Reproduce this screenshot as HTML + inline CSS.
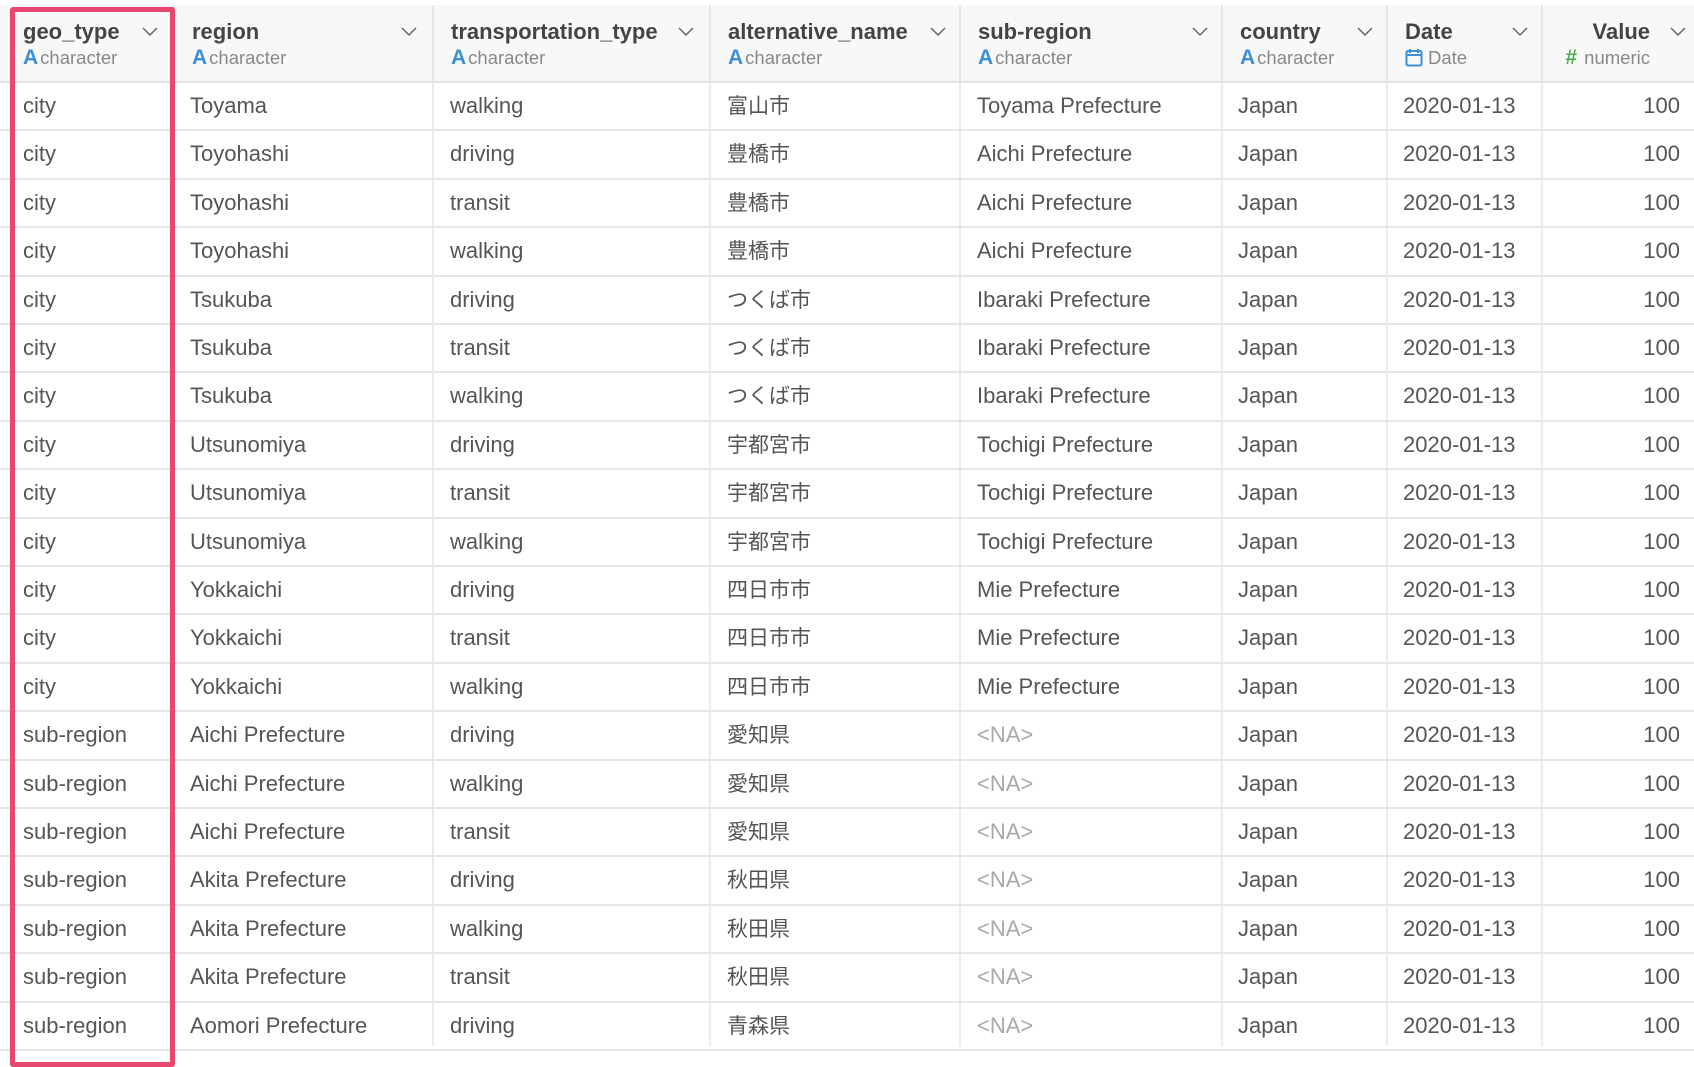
<!DOCTYPE html>
<html><head><meta charset="utf-8"><style>
*{margin:0;padding:0;box-sizing:border-box}
body{width:1694px;height:1046px;overflow:hidden;background:#fff;font-family:"Liberation Sans","Noto Sans CJK JP",sans-serif;color:#555;position:relative}
.hdr{position:absolute;top:5px;left:0;width:1694px;height:78px;background:#f8f8f8;border-bottom:2px solid #e3e3e3}
.c{position:absolute;top:0;height:100%;border-left:2px solid #e6e6e6}
.h .t{position:absolute;top:14px;left:17px;font-weight:bold;font-size:22px;line-height:26px;color:#444}
.h .s{position:absolute;top:42px;left:17px;font-size:18.5px;line-height:22px;color:#888}
.h .s b{color:#3a8fd9;font-size:21px;margin-right:2px}
.ch{position:absolute;top:20px;width:16px;height:12px}
.row{position:absolute;left:0;width:1694px;height:48.4px;border-bottom:2px solid #e6e6e6}
.row span{position:absolute;top:10px;font-size:22px;line-height:26px;color:#555;white-space:nowrap}
.row span.j{font-family:"Noto Sans CJK JP",sans-serif;font-size:21px;top:9px;line-height:26px}
.vl{position:absolute;top:83px;bottom:0;border-left:2px solid #ececec}
.red{position:absolute;left:10px;top:7px;width:165px;height:1060px;border:5px solid #e8476f;border-radius:3px}
.na{color:#aaa!important}
</style></head><body>
<div class="hdr">
<div class="h c" style="left:0;width:173px;border:none"><div class="t" style="left:23px">geo_type</div><div class="s" style="left:23px"><b>A</b>character</div><svg class="ch" style="left:142px" viewBox="0 0 16 12"><path d="M1 3l7 7 7-7" fill="none" stroke="#666" stroke-width="1.5"/></svg></div>
<div class="h c" style="left:173px;width:259px"><div class="t">region</div><div class="s"><b>A</b>character</div><svg class="ch" style="left:226px" viewBox="0 0 16 12"><path d="M1 3l7 7 7-7" fill="none" stroke="#666" stroke-width="1.5"/></svg></div>
<div class="h c" style="left:432px;width:277px"><div class="t">transportation_type</div><div class="s"><b>A</b>character</div><svg class="ch" style="left:244px" viewBox="0 0 16 12"><path d="M1 3l7 7 7-7" fill="none" stroke="#666" stroke-width="1.5"/></svg></div>
<div class="h c" style="left:709px;width:250px"><div class="t">alternative_name</div><div class="s"><b>A</b>character</div><svg class="ch" style="left:219px" viewBox="0 0 16 12"><path d="M1 3l7 7 7-7" fill="none" stroke="#666" stroke-width="1.5"/></svg></div>
<div class="h c" style="left:959px;width:262px"><div class="t">sub-region</div><div class="s"><b>A</b>character</div><svg class="ch" style="left:231px" viewBox="0 0 16 12"><path d="M1 3l7 7 7-7" fill="none" stroke="#666" stroke-width="1.5"/></svg></div>
<div class="h c" style="left:1221px;width:165px"><div class="t">country</div><div class="s"><b>A</b>character</div><svg class="ch" style="left:134px" viewBox="0 0 16 12"><path d="M1 3l7 7 7-7" fill="none" stroke="#666" stroke-width="1.5"/></svg></div>
<div class="h c" style="left:1386px;width:155px"><div class="t">Date</div><div class="s"><svg width="18" height="19" viewBox="0 0 18 19" style="vertical-align:-3px;margin-right:5px"><rect x="1.5" y="3" width="15" height="14.5" rx="1.5" fill="none" stroke="#3a8fd9" stroke-width="2"/><path d="M1.5 7h15M5 1v4M13 1v4" stroke="#3a8fd9" stroke-width="2"/></svg>Date</div><svg class="ch" style="left:124px" viewBox="0 0 16 12"><path d="M1 3l7 7 7-7" fill="none" stroke="#666" stroke-width="1.5"/></svg></div>
<div class="h c" style="left:1541px;width:153px"><div class="t" style="left:auto;right:44px">Value</div><div class="s" style="left:auto;right:44px"><b style="color:#4caf50">#</b> numeric</div><svg class="ch" style="left:127px" viewBox="0 0 16 12"><path d="M1 3l7 7 7-7" fill="none" stroke="#666" stroke-width="1.5"/></svg></div>
</div>
<div class="vl" style="left:173px"></div><div class="vl" style="left:432px"></div><div class="vl" style="left:709px"></div><div class="vl" style="left:959px"></div><div class="vl" style="left:1221px"></div><div class="vl" style="left:1386px"></div><div class="vl" style="left:1541px"></div>
<div id="rows"></div>
<script>
const d=[
["city","Toyama","walking","富山市","Toyama Prefecture"],
["city","Toyohashi","driving","豊橋市","Aichi Prefecture"],
["city","Toyohashi","transit","豊橋市","Aichi Prefecture"],
["city","Toyohashi","walking","豊橋市","Aichi Prefecture"],
["city","Tsukuba","driving","つくば市","Ibaraki Prefecture"],
["city","Tsukuba","transit","つくば市","Ibaraki Prefecture"],
["city","Tsukuba","walking","つくば市","Ibaraki Prefecture"],
["city","Utsunomiya","driving","宇都宮市","Tochigi Prefecture"],
["city","Utsunomiya","transit","宇都宮市","Tochigi Prefecture"],
["city","Utsunomiya","walking","宇都宮市","Tochigi Prefecture"],
["city","Yokkaichi","driving","四日市市","Mie Prefecture"],
["city","Yokkaichi","transit","四日市市","Mie Prefecture"],
["city","Yokkaichi","walking","四日市市","Mie Prefecture"],
["sub-region","Aichi Prefecture","driving","愛知県",null],
["sub-region","Aichi Prefecture","walking","愛知県",null],
["sub-region","Aichi Prefecture","transit","愛知県",null],
["sub-region","Akita Prefecture","driving","秋田県",null],
["sub-region","Akita Prefecture","walking","秋田県",null],
["sub-region","Akita Prefecture","transit","秋田県",null],
["sub-region","Aomori Prefecture","driving","青森県",null]];
let h="";
d.forEach((r,i)=>{const y=83+i*48.4;
h+=`<div class="row" style="top:${y}px"><span style="left:23px">${r[0]}</span><span style="left:190px">${r[1]}</span><span style="left:450px">${r[2]}</span><span class="j" style="left:727px">${r[3]}</span>${r[4]?`<span style="left:977px">${r[4]}</span>`:`<span class="na" style="left:977px">&lt;NA&gt;</span>`}<span style="left:1238px">Japan</span><span style="left:1403px">2020-01-13</span><span style="right:14px">100</span></div>`;});
document.getElementById("rows").innerHTML=h;
</script>
<div class="red"></div>
</body></html>
